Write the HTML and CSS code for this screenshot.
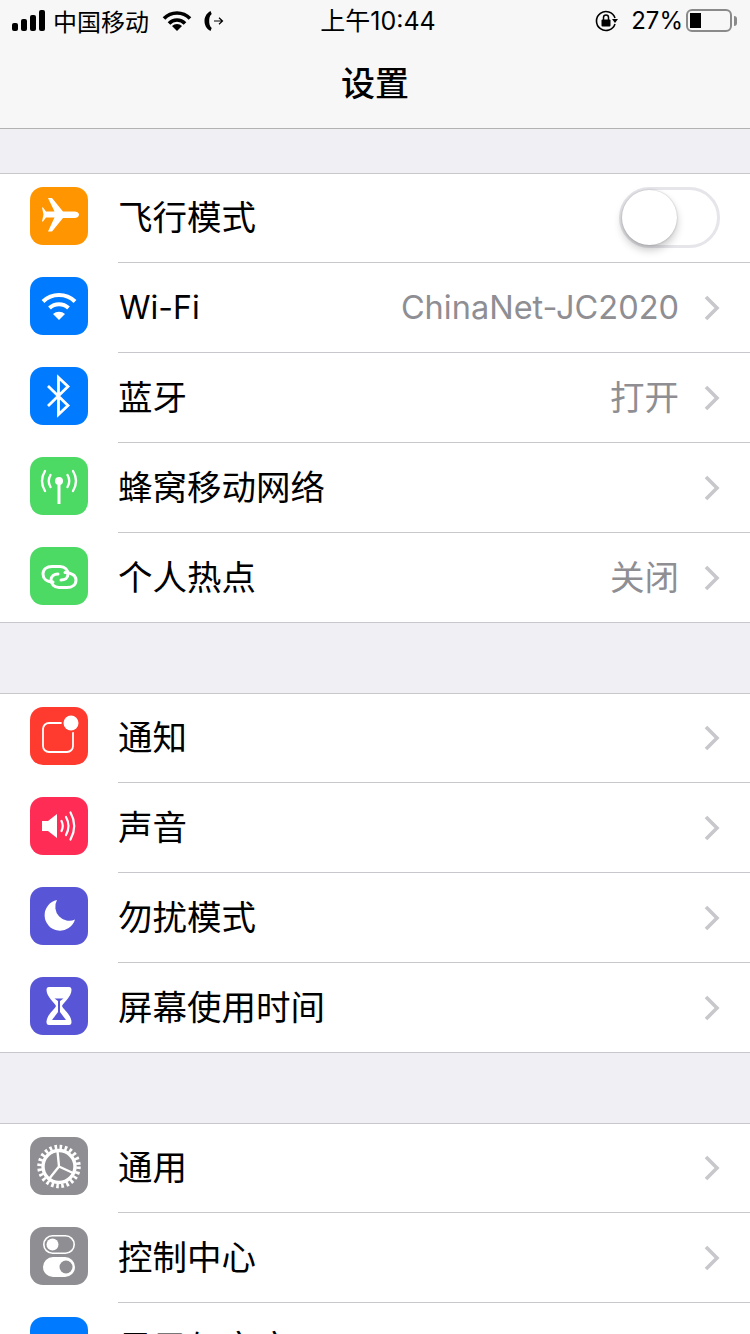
FILE: index.html
```html
<!DOCTYPE html>
<html lang="zh-CN">
<head>
<meta charset="utf-8">
<title>设置</title>
<link rel="stylesheet" href="styles.css">
</head>
<body>
<header class="top">
  <div class="status">
    <div class="status-left">
      <div class="signal"><i class="b1"></i><i class="b2"></i><i class="b3"></i><i class="b4"></i></div>
      <span class="carrier">中国移动</span>
      <svg class="st-wifi" width="30" height="22" viewBox="0 0 30 22"><g fill="none" stroke="#000" stroke-width="3.6"><path d="M2 8.500a18 18 0 0 1 26 0"/><path d="M7 13.500a11 11 0 0 1 16 0"/></g><path d="M15 21l-5-5a7 7 0 0 1 10 0z" fill="#000"/></svg>
      <svg class="st-call" width="20" height="22" viewBox="0 0 20 22"><path d="M6.500 1C2 3.500.5 7.500.5 11s1.500 7.500 6 10l1.200-3C5.500 16 5.200 13.500 5.200 11s.3-5 2.500-7z" fill="#000"/><path d="M10 11h8.500M15 7.800l3.500 3.200-3.500 3.200" fill="none" stroke="#000" stroke-width="1.200"/></svg>
    </div>
    <div class="time">上午10:44</div>
    <div class="status-right">
      <svg class="st-lock" width="24" height="22" viewBox="0 0 24 22"><path d="M20 8A9.500 9.500 0 1 0 20 14" fill="none" stroke="#000" stroke-width="1.600"/><path d="M17 9h6l-3 4z" fill="#000"/><rect x="6.500" y="9.500" width="9" height="7" rx="1" fill="#000"/><path d="M8.500 10V7.500a2.500 2.500 0 0 1 5 0V10" fill="none" stroke="#000" stroke-width="1.500"/></svg>
      <span class="pct">27%</span>
      <div class="battery"><div class="level"></div></div>
      <div class="nub"></div>
    </div>
  </div>
  <div class="nav">设置</div>
</header>

<section class="group">
  <div class="row">
    <div class="icon orange"><svg viewBox="0 0 58 58"><path d="M49 27.500c0-2-2.500-3-4.500-3H33L22 11h-4l6.500 13.500H16L13 20.500h-1l1.500 7-1.500 7h1l3-4h8.500L18 44.500h4L33 31h11.500c2 0 4.500-1 4.500-3.500z" fill="#fff"/></svg></div>
    <div class="body"><span class="label">飞行模式</span><div class="toggle"><div class="knob"></div></div></div>
  </div>
  <div class="row">
    <div class="icon blue"><svg viewBox="0 0 58 58"><g fill="none" stroke="#fff" stroke-width="4"><path d="M13 24.500a23 23 0 0 1 32 0"/><path d="M19.500 31a14 14 0 0 1 19 0"/></g><path d="M29 43l-6-6a9 9 0 0 1 12 0z" fill="#fff"/></svg></div>
    <div class="body"><span class="label latin">Wi-Fi</span><span class="value latin-value">ChinaNet-JC2020</span><svg class="chev" viewBox="0 0 16 26"><path d="M2 2l11 11L2 24" fill="none" stroke="#c7c7cc" stroke-width="3.600"/></svg></div>
  </div>
  <div class="row">
    <div class="icon blue"><svg viewBox="0 0 58 58"><path d="M18 19l20 19.500-9.500 9V10.500l9.500 9L18 39" fill="none" stroke="#fff" stroke-width="2.800"/></svg></div>
    <div class="body"><span class="label">蓝牙</span><span class="value">打开</span><svg class="chev" viewBox="0 0 16 26"><path d="M2 2l11 11L2 24" fill="none" stroke="#c7c7cc" stroke-width="3.600"/></svg></div>
  </div>
  <div class="row">
    <div class="icon green"><svg viewBox="0 0 58 58"><circle cx="29" cy="24" r="4" fill="#fff"/><path d="M29 24v23" stroke="#fff" stroke-width="3" fill="none"/><g fill="none" stroke="#fff" stroke-width="2.400" stroke-linecap="round"><path d="M15 14Q9 24 15 34"/><path d="M20.500 18Q17 24 20.500 30"/><path d="M43 14Q49 24 43 34"/><path d="M37.500 18Q41 24 37.500 30"/></g></svg></div>
    <div class="body"><span class="label">蜂窝移动网络</span><svg class="chev" viewBox="0 0 16 26"><path d="M2 2l11 11L2 24" fill="none" stroke="#c7c7cc" stroke-width="3.600"/></svg></div>
  </div>
  <div class="row">
    <div class="icon green"><svg viewBox="0 0 58 58"><g fill="none" stroke="#fff" stroke-width="3" stroke-linecap="round"><path d="M23 35C16 35 13 31 13 27 13 22 17 19.500 22 19.500H30C35 19.500 38 23 38 27 38 31 35 33 31 33"/><path d="M35 25.500C42 25.500 46 29 46 33 46 38 42 40.500 37 40.500H29C24 40.500 21 37 21 33 21 29.500 24 27 28 27"/></g></svg></div>
    <div class="body"><span class="label">个人热点</span><span class="value">关闭</span><svg class="chev" viewBox="0 0 16 26"><path d="M2 2l11 11L2 24" fill="none" stroke="#c7c7cc" stroke-width="3.600"/></svg></div>
  </div>
</section>

<section class="group">
  <div class="row">
    <div class="icon red"><svg viewBox="0 0 58 58"><rect x="13" y="16" width="30" height="29" rx="6" fill="none" stroke="#fff" stroke-width="1.800"/><circle cx="41" cy="16" r="9.500" fill="#ff3b30"/><circle cx="41" cy="16" r="7.500" fill="#fff"/></svg></div>
    <div class="body"><span class="label">通知</span><svg class="chev" viewBox="0 0 16 26"><path d="M2 2l11 11L2 24" fill="none" stroke="#c7c7cc" stroke-width="3.600"/></svg></div>
  </div>
  <div class="row">
    <div class="icon pink"><svg viewBox="0 0 58 58"><path d="M12 24h6l9-7v24l-9-7h-6z" fill="#fff"/><g fill="none" stroke="#fff" stroke-width="2.200" stroke-linecap="round"><path d="M31.500 24Q34 29 31.500 34"/><path d="M36 20Q41 29 36 38"/><path d="M40.500 15.500Q48 29 40.500 42.500"/></g></svg></div>
    <div class="body"><span class="label">声音</span><svg class="chev" viewBox="0 0 16 26"><path d="M2 2l11 11L2 24" fill="none" stroke="#c7c7cc" stroke-width="3.600"/></svg></div>
  </div>
  <div class="row">
    <div class="icon purple"><svg viewBox="0 0 58 58"><path d="M27 13A15.500 15.500 0 1 0 45 32.500 14 14 0 0 1 27 13z" fill="#fff"/></svg></div>
    <div class="body"><span class="label">勿扰模式</span><svg class="chev" viewBox="0 0 16 26"><path d="M2 2l11 11L2 24" fill="none" stroke="#c7c7cc" stroke-width="3.600"/></svg></div>
  </div>
  <div class="row">
    <div class="icon purple"><svg viewBox="0 0 58 58"><path d="M19 10h20q2.500 0 2.500 3c0 7-8.500 13-9.500 16 1 3 9.500 9 9.500 16q0 3-2.500 3H19q-2.500 0-2.500-3c0-7 8.500-13 9.500-16-1-3-9.500-9-9.500-16q0-3 2.500-3z" fill="#fff"/><path d="M24.500 21.500h9l-3.500 2.500v11l6 8H22l6-8V24z" fill="#5856d6"/></svg></div>
    <div class="body"><span class="label">屏幕使用时间</span><svg class="chev" viewBox="0 0 16 26"><path d="M2 2l11 11L2 24" fill="none" stroke="#c7c7cc" stroke-width="3.600"/></svg></div>
  </div>
</section>

<section class="group">
  <div class="row">
    <div class="icon gray"><svg viewBox="0 0 58 58"><g fill="none" stroke="#fff"><circle cx="29" cy="29.500" r="19.500" stroke-width="4.500" stroke-dasharray="2.600 2.505"/><circle cx="29" cy="29.500" r="16" stroke-width="3.400"/><path d="M29 29.500L27.500 14M29 29.500L43 36M29 29.500L19 42" stroke-width="2.400"/></g></svg></div>
    <div class="body"><span class="label">通用</span><svg class="chev" viewBox="0 0 16 26"><path d="M2 2l11 11L2 24" fill="none" stroke="#c7c7cc" stroke-width="3.600"/></svg></div>
  </div>
  <div class="row">
    <div class="icon gray"><svg viewBox="0 0 58 58"><rect x="13.800" y="8.800" width="30.400" height="17.400" rx="8.700" fill="none" stroke="#fff" stroke-width="1.600"/><circle cx="22.500" cy="17.500" r="6" fill="#fff"/><rect x="13" y="30" width="32" height="20" rx="10" fill="#fff"/><circle cx="36" cy="40" r="6.500" fill="#8e8e93"/></svg></div>
    <div class="body"><span class="label">控制中心</span><svg class="chev" viewBox="0 0 16 26"><path d="M2 2l11 11L2 24" fill="none" stroke="#c7c7cc" stroke-width="3.600"/></svg></div>
  </div>
  <div class="row">
    <div class="icon blue"></div>
    <div class="body"><span class="label">显示与亮度</span><svg class="chev" viewBox="0 0 16 26"><path d="M2 2l11 11L2 24" fill="none" stroke="#c7c7cc" stroke-width="3.600"/></svg></div>
  </div>
</section>
</body>
</html>
```
FILE: styles.css
```css
html, body {
  margin: 0;
  padding: 0;
  height: 1334px;
  overflow: hidden;
}
body {
  background: #efeff4;
  color: #000;
  font-family: Inter, "Noto Sans CJK SC", sans-serif;
}
.top {
  height: 128px;
  background: #f7f7f7;
  border-bottom: 1px solid #b2b2b2;
}
.status {
  height: 40px;
  display: grid;
  grid-template-columns: 1fr auto 1fr;
  align-items: center;
}
.status-left, .status-right {
  display: flex;
  align-items: center;
}
.status-left { padding-left: 12px; }
.status-right { justify-content: flex-end; padding-right: 13px; }
.signal {
  display: flex;
  align-items: flex-end;
  gap: 3px;
  height: 21px;
}
.signal i {
  display: block;
  width: 6px;
  background: #000;
  border-radius: 2px;
}
.b1 { height: 8px; }
.b2 { height: 12px; }
.b3 { height: 16px; }
.b4 { height: 21px; }
.carrier {
  font: 400 24px/40px "Noto Sans CJK SC", sans-serif;
  margin-left: 8px;
}
.st-wifi { margin-left: 13px; }
.st-call { margin-left: 12px; }
.time {
  font: 400 25px/40px Inter, "Noto Sans CJK SC", sans-serif;
  padding: 1px 0 0 6px;
}
.pct {
  font: 400 24px/40px Inter, sans-serif;
  margin-left: 12px;
  padding-top: 1px;
}
.battery {
  box-sizing: border-box;
  width: 46px;
  height: 23px;
  margin-left: 3px;
  border: 2px solid #8a8a8a;
  border-radius: 6px;
  padding: 2px;
}
.level {
  width: 11px;
  height: 100%;
  background: #000;
}
.nub {
  width: 3px;
  height: 10px;
  margin-left: 2px;
  background: #8a8a8a;
  border-radius: 0 3px 3px 0;
}
.nav {
  height: 88px;
  display: flex;
  align-items: center;
  justify-content: center;
  font: 500 34px/1 "Noto Sans CJK SC", sans-serif;
  padding-bottom: 4px;
  box-sizing: border-box;
}
.group {
  background: #fff;
  box-shadow: inset 0 1px 0 #c8c7cc, inset 0 -1px 0 #c8c7cc;
  margin-top: 70px;
}
.top + .group { margin-top: 44px; }
.row {
  height: 90px;
  display: flex;
  padding-left: 30px;
  box-sizing: border-box;
}
.icon {
  width: 58px;
  height: 58px;
  margin-top: 14px;
  border-radius: 13px;
  flex: none;
}
.icon svg { display: block; width: 58px; height: 58px; }
.orange { background: #ff9500; }
.blue { background: #007aff; }
.green { background: #4cd964; }
.red { background: #ff3b30; }
.pink { background: #ff2d55; }
.purple { background: #5856d6; }
.gray { background: #8e8e93; }
.body {
  flex: 1;
  min-width: 0;
  margin-left: 30px;
  padding-right: 30px;
  display: flex;
  align-items: center;
  border-bottom: 1px solid #c8c7cc;
  box-sizing: border-box;
}
.row:last-child .body { border-bottom: 0; }
.label {
  font: 400 34.5px/44px Inter, "Noto Sans CJK SC", sans-serif;
}
.label.latin { font-size: 32px; margin-left: 1px; }
.value {
  margin-left: auto;
  font: 400 34.5px/44px Inter, "Noto Sans CJK SC", sans-serif;
  color: #8e8e93;
}
.value.latin-value { font-size: 32.5px; }
.chev {
  width: 16px;
  height: 26px;
  flex: none;
  margin-left: 25px;
}
.label + .chev { margin-left: auto; }
.toggle {
  box-sizing: border-box;
  width: 101px;
  height: 61px;
  margin-left: auto;
  border: 3px solid #e5e5ea;
  border-radius: 31px;
  display: flex;
  align-items: center;
}
.knob {
  width: 55px;
  height: 55px;
  border-radius: 50%;
  background: #fff;
  box-shadow: 0 5px 8px rgba(0, 0, 0, .22), 0 0 2px rgba(0, 0, 0, .25);
}
```
